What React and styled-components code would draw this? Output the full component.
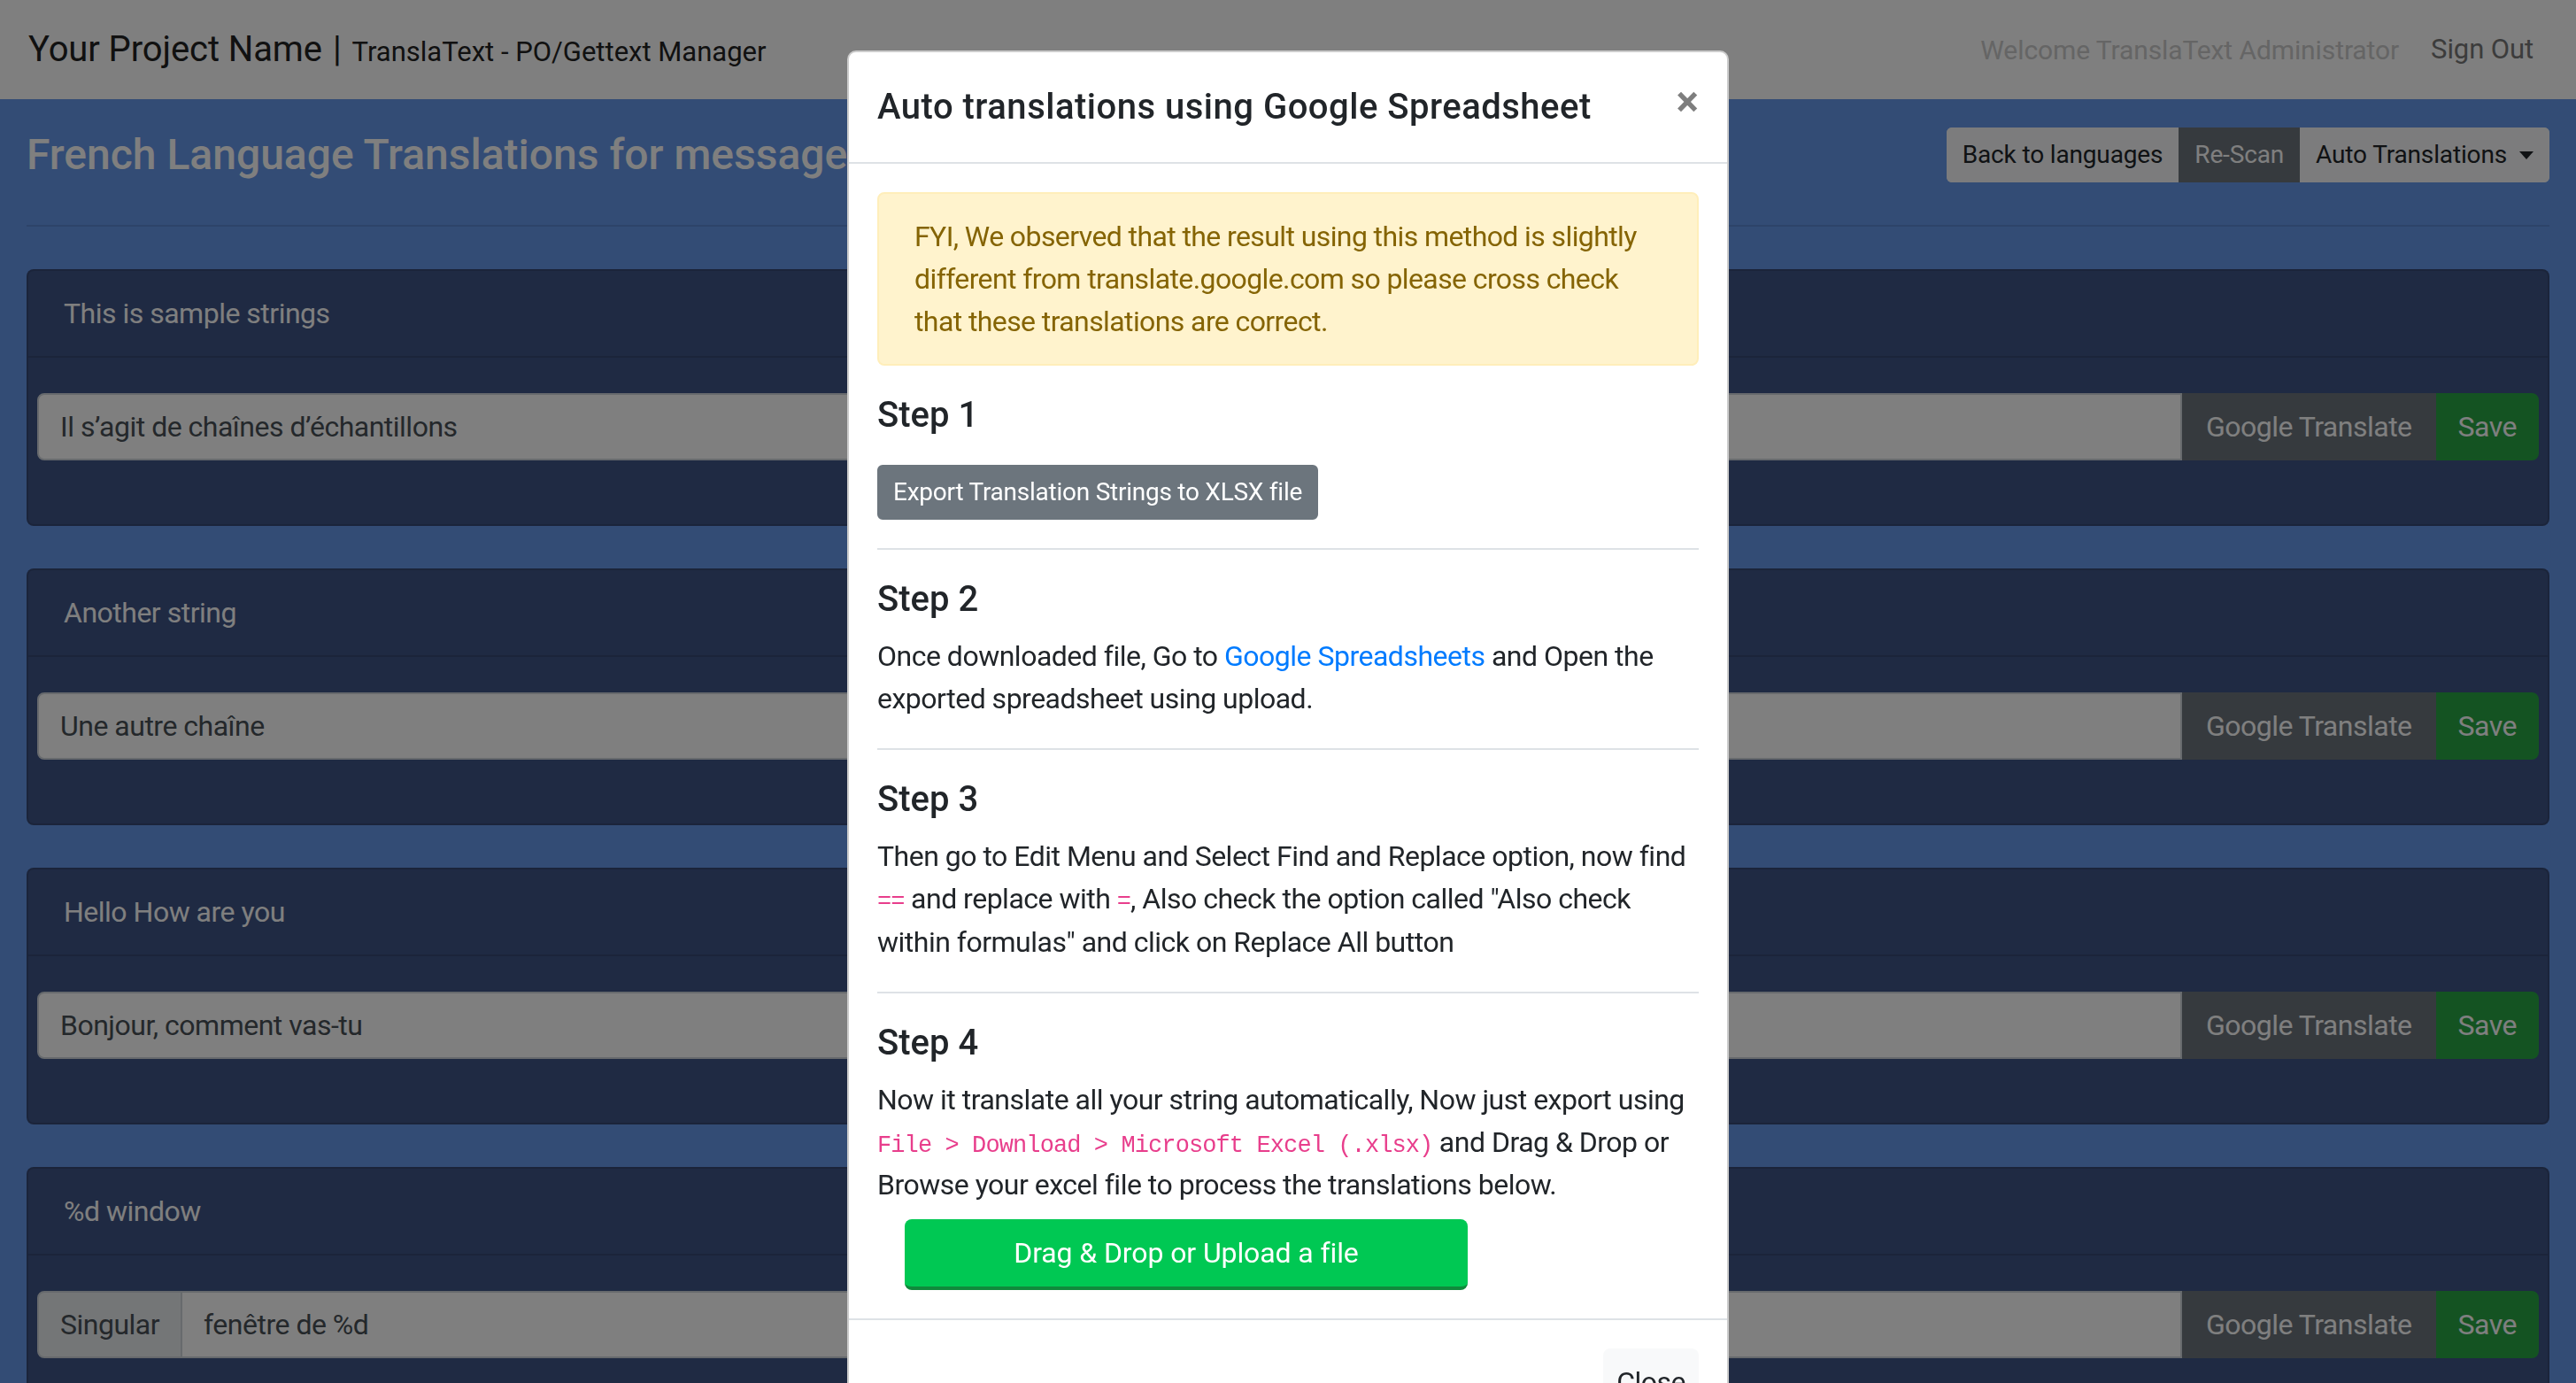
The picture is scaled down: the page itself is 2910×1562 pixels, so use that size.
import React from "react";
import styled, { createGlobalStyle } from "styled-components";

const GlobalStyle = createGlobalStyle`
  html, body {
    margin: 0;
    padding: 0;
  }
  body {
    font-family: Roboto, "Liberation Sans", sans-serif;
    font-size: 32px;
    line-height: 1.5;
    letter-spacing: -0.5px;
    color: #212529;
    background: #6698ea;
    overflow: hidden;
  }
  * {
    box-sizing: border-box;
  }
`;

const Page = styled.div`
  min-height: 100vh;
  background: #6698ea;
`;

const Navbar = styled.nav`
  height: 112px;
  padding: 0 32px;
  background: #fff;
  display: flex;
  align-items: center;
  justify-content: space-between;
  letter-spacing: -0.1px;
`;

const Brand = styled.div`
  display: flex;
  align-items: baseline;
  font-size: 40px;
  color: #222;
  white-space: nowrap;
`;

const BrandSep = styled.span`
  margin: 0 12px;
`;

const BrandSub = styled.span`
  font-size: 31px;
  letter-spacing: 0;
`;

const NavRight = styled.div`
  display: flex;
  align-items: center;
  font-size: 30px;
`;

const NavText = styled.span`
  color: #cacaca;
  margin-right: 20px;
`;

const NavLink = styled.a`
  color: #787878;
  padding: 0 16px;
  font-size: 31px;
  text-decoration: none;
`;

const Main = styled.main`
  padding: 32px 30px 0;
`;

const TopBar = styled.div`
  height: 62px;
  display: flex;
  align-items: center;
  justify-content: space-between;
`;

const PageTitle = styled.h3`
  margin: 0;
  font-size: 48px;
  font-weight: 500;
  line-height: 1.2;
  letter-spacing: 0;
  color: #fff;
  white-space: nowrap;
`;

const BtnGroup = styled.div`
  display: flex;
  border-radius: 6px;
  overflow: hidden;
`;

const SmallBtn = styled.button`
  height: 62px;
  padding: 0 16px;
  border: 2px solid ${p => (p.variant === "secondary" ? "#6c757d" : "#f8f9fa")};
  background: ${p => (p.variant === "secondary" ? "#6c757d" : "#f8f9fa")};
  color: ${p => (p.variant === "secondary" ? "#fff" : "#212529")};
  font: inherit;
  font-size: 28px;
  letter-spacing: -0.15px;
  display: flex;
  align-items: center;
  white-space: nowrap;
  &::after {
    content: ${p => (p.caret ? "''" : "none")};
    margin-left: 14px;
    border-top: 9px solid currentColor;
    border-left: 8px solid transparent;
    border-right: 8px solid transparent;
  }
`;

const Rule = styled.hr`
  margin: 48px 0;
  border: 0;
  border-top: 2px solid rgba(0, 0, 0, 0.1);
`;

const Card = styled.section`
  background: #3e5486;
  border: 2px solid rgba(0, 0, 0, 0.125);
  border-radius: 8px;
  margin-bottom: 48px;
`;

const CardHeader = styled.div`
  padding: 24px 40px;
  color: #fff;
  border-bottom: 2px solid rgba(0, 0, 0, 0.125);
`;

const CardBody = styled.div`
  padding: 40px 10px;
`;

const InputGroup = styled.div`
  display: flex;
  height: 76px;
  margin-bottom: 32px;
`;

const Prepend = styled.span`
  display: flex;
  align-items: center;
  padding: 0 24px;
  background: #e9ecef;
  color: #495057;
  border: 2px solid #ced4da;
  border-radius: 8px 0 0 8px;
`;

const Field = styled.input`
  flex: 1;
  min-width: 0;
  padding: 0 24px;
  border: 2px solid #ced4da;
  border-left-width: ${p => (p.joined ? 0 : "2px")};
  border-radius: ${p => (p.joined ? "0" : "8px 0 0 8px")};
  background: #fff;
  color: #495057;
  font: inherit;
  letter-spacing: inherit;
  outline: none;
`;

const GroupBtn = styled.button`
  padding: 0 ${p => (p.success ? "23px" : "25px")};
  border: 2px solid ${p => (p.success ? "#28a745" : "#6c757d")};
  background: ${p => (p.success ? "#28a745" : "#6c757d")};
  border-radius: ${p => (p.success ? "0 8px 8px 0" : "0")};
  color: #fff;
  font: inherit;
  letter-spacing: inherit;
  white-space: nowrap;
`;

const Backdrop = styled.div`
  position: fixed;
  inset: 0;
  background: rgba(0, 0, 0, 0.5);
  z-index: 1040;
`;

const ModalLayer = styled.div`
  position: fixed;
  inset: 0;
  overflow: hidden;
  z-index: 1050;
`;

const Dialog = styled.div`
  width: 996px;
  margin: 57px auto 0;
  background: #fff;
  border: 2px solid rgba(0, 0, 0, 0.2);
  border-radius: 10px;
`;

const ModalHeader = styled.div`
  display: flex;
  align-items: flex-start;
  padding: 32px;
  border-bottom: 2px solid #dee2e6;
`;

const ModalTitle = styled.h5`
  margin: 0;
  font-size: 40px;
  font-weight: 500;
  line-height: 1.5;
  letter-spacing: 0.5px;
`;

const CloseX = styled.button`
  margin: -32px -32px -32px auto;
  padding: 32px;
  border: 0;
  background: none;
  font: inherit;
  font-size: 48px;
  font-weight: 700;
  line-height: 1;
  color: #000;
  opacity: 0.5;
`;

const ModalBody = styled.div`
  padding: 32px;
`;

const Alert = styled.div`
  padding: 24px 40px;
  margin-bottom: 32px;
  background: #fff3cd;
  border: 2px solid #ffeeba;
  border-radius: 8px;
  color: #856404;
  letter-spacing: -0.6px;
`;

const StepTitle = styled.h5`
  margin: 0 0 16px;
  font-size: 40px;
  font-weight: 500;
  line-height: 1.2;
  letter-spacing: 0;
`;

const Text = styled.p`
  margin: 0 0 ${p => (p.last ? "0" : "32px")};
`;

const Divider = styled.hr`
  margin: 32px 0;
  border: 0;
  border-top: 2px solid #dee2e6;
`;

const Code = styled.code`
  font-family: "Liberation Mono", "DejaVu Sans Mono", monospace;
  font-size: 27px;
  letter-spacing: -0.9px;
  color: #e83e8c;
`;

const Link = styled.a`
  color: #007bff;
  text-decoration: none;
`;

const ExportBtn = styled.button`
  margin-top: 16px;
  height: 62px;
  padding: 0 16px;
  border: 2px solid #6c757d;
  border-radius: 6px;
  background: #6c757d;
  color: #fff;
  font: inherit;
  font-size: 28px;
  letter-spacing: -0.25px;
`;

const DropZone = styled.div`
  width: 636px;
  height: 80px;
  margin: 15px 0 0 31px;
  display: flex;
  align-items: center;
  justify-content: center;
  background: #00c853;
  border-bottom: 4px solid #10893b;
  border-radius: 8px;
  color: #fff;
  letter-spacing: -0.1px;
`;

const ModalFooter = styled.div`
  display: flex;
  justify-content: flex-end;
  padding: 24px;
  border-top: 2px solid #dee2e6;
`;

const FooterBtn = styled.button`
  margin: 8px;
  padding: 12px 13px;
  border: 2px solid #f8f9fa;
  border-radius: 8px;
  background: #f8f9fa;
  color: #212529;
  font: inherit;
  letter-spacing: inherit;
`;

const strings = [
  { id: 1, source: "This is sample strings", value: "Il s’agit de chaînes d’échantillons" },
  { id: 2, source: "Another string", value: "Une autre chaîne" },
  { id: 3, source: "Hello How are you", value: "Bonjour, comment vas-tu" },
  {
    id: 4,
    source: "%d window",
    forms: [
      { label: "Singular", value: "fenêtre de %d" },
      { label: "Plural", value: "%d fenêtres" }
    ]
  }
];

const TranslationRow = ({ label, value }) => (
  <InputGroup>
    {label && <Prepend>{label}</Prepend>}
    <Field joined={!!label} defaultValue={value} />
    <GroupBtn>Google Translate</GroupBtn>
    <GroupBtn success>Save</GroupBtn>
  </InputGroup>
);

const StringCard = ({ source, value, forms }) => (
  <Card>
    <CardHeader>{source}</CardHeader>
    <CardBody>
      {forms ? (
        forms.map(f => <TranslationRow key={f.label} label={f.label} value={f.value} />)
      ) : (
        <TranslationRow value={value} />
      )}
    </CardBody>
  </Card>
);

const AutoTranslateModal = () => (
  <>
    <Backdrop />
    <ModalLayer>
      <Dialog>
        <ModalHeader>
          <ModalTitle>Auto translations using Google Spreadsheet</ModalTitle>
          <CloseX>×</CloseX>
        </ModalHeader>
        <ModalBody>
          <Alert>
            FYI, We observed that the result using this method is slightly
            <br />
            different from translate.google.com so please cross check
            <br />
            that these translations are correct.
          </Alert>

          <StepTitle>Step 1</StepTitle>
          <ExportBtn>Export Translation Strings to XLSX file</ExportBtn>
          <Divider />

          <StepTitle>Step 2</StepTitle>
          <Text>
            Once downloaded file, Go to <Link href="#">Google Spreadsheets</Link> and Open the
            exported spreadsheet using upload.
          </Text>
          <Divider />

          <StepTitle>Step 3</StepTitle>
          <Text>
            Then go to Edit Menu and Select Find and Replace option, now find
            <br />
            <Code>==</Code> and replace with <Code>=</Code>, Also check the option called "Also check
            <br />
            within formulas" and click on Replace All button
          </Text>
          <Divider />

          <StepTitle>Step 4</StepTitle>
          <Text last>
            Now it translate all your string automatically, Now just export using{" "}
            <Code>File &gt; Download &gt; Microsoft Excel (.xlsx)</Code> and Drag &amp; Drop or
            Browse your excel file to process the translations below.
          </Text>
          <DropZone>Drag &amp; Drop or Upload a file</DropZone>
        </ModalBody>
        <ModalFooter>
          <FooterBtn>Close</FooterBtn>
        </ModalFooter>
      </Dialog>
    </ModalLayer>
  </>
);

const App = () => (
  <>
    <GlobalStyle />
    <Page>
      <Navbar>
        <Brand>
          Your Project Name<BrandSep>|</BrandSep>
          <BrandSub>TranslaText - PO/Gettext Manager</BrandSub>
        </Brand>
        <NavRight>
          <NavText>Welcome TranslaText Administrator</NavText>
          <NavLink href="#">Sign Out</NavLink>
        </NavRight>
      </Navbar>
      <Main>
        <TopBar>
          <PageTitle>French Language Translations for messages.po</PageTitle>
          <BtnGroup>
            <SmallBtn>Back to languages</SmallBtn>
            <SmallBtn variant="secondary">Re-Scan</SmallBtn>
            <SmallBtn caret>Auto Translations</SmallBtn>
          </BtnGroup>
        </TopBar>
        <Rule />
        {strings.map(s => (
          <StringCard key={s.id} {...s} />
        ))}
      </Main>
    </Page>
    <AutoTranslateModal />
  </>
);

export default App;
